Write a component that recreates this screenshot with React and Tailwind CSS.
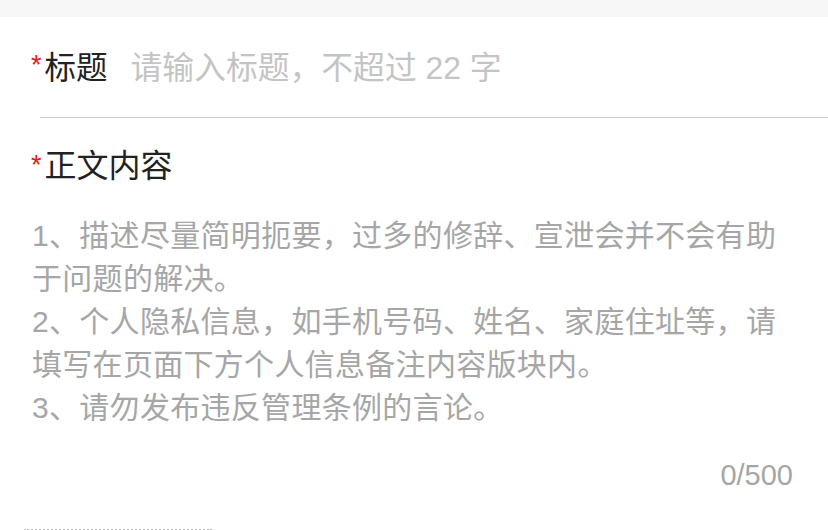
export default function App() {
  const font = { fontFamily: '"Liberation Sans", "Noto Sans CJK SC", sans-serif' };
  return (
    <div className="w-[828px] h-[530px] bg-white overflow-hidden" style={font}>
      {/* top strip */}
      <div className="h-[17px] bg-[#f7f7f7]"></div>

      {/* title row */}
      <div className="flex items-center h-[100px] pl-[31px] pt-[3px]">
        <span className="text-[#e02020] text-[27px] self-start mt-[32px] leading-none">*</span>
        <span className="ml-[3px] text-[31.5px] text-[#222] leading-none">标题</span>
        <span className="ml-[23px] text-[31.8px] text-[#c4c4c4] leading-none">请输入标题，不超过 22 字</span>
      </div>
      <div className="ml-[40px] h-px bg-[#cfcfcf]"></div>

      {/* body */}
      <div className="px-[32px]">
        <div className="flex items-center h-[96px] -ml-px">
          <span className="text-[#e02020] text-[27px] self-start mt-[34px] leading-none">*</span>
          <span className="ml-[3px] text-[32px] text-[#222] leading-none">正文内容</span>
        </div>
        <div className="text-[30px] leading-[43px] tracking-[0.3px] text-[#a6a6a6]">
          <p>1、描述尽量简明扼要，过多的修辞、宣泄会并不会有助于问题的解决。</p>
          <p>2、个人隐私信息，如手机号码、姓名、家庭住址等，请填写在页面下方个人信息备注内容版块内。</p>
          <p>3、请勿发布违反管理条例的言论。</p>
        </div>
        <div className="flex justify-end mt-[26px] pr-[3px]">
          <span className="text-[29px] leading-[40px] text-[#a6a6a6]">0/500</span>
        </div>
      </div>
      <div className="ml-[24px] mt-[34px] w-[188px] border-t-2 border-dotted border-[#bdbdbd]"></div>
    </div>
  );
}
